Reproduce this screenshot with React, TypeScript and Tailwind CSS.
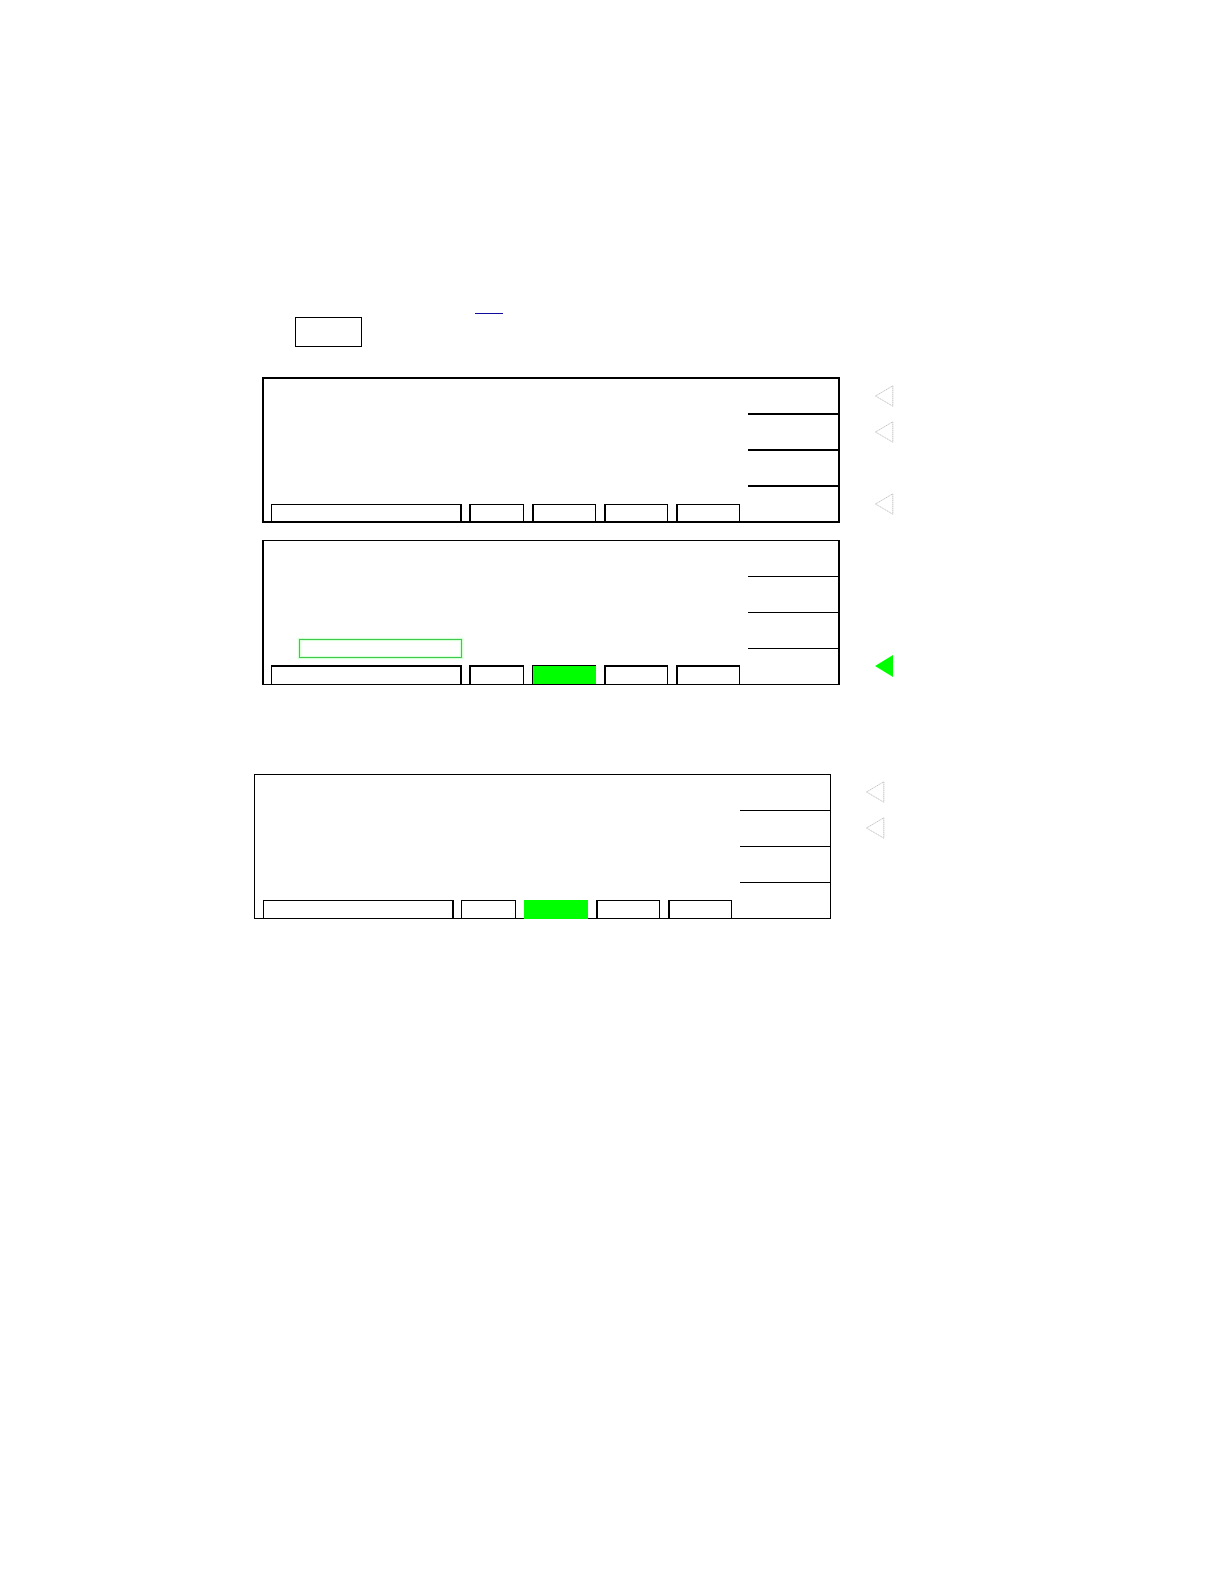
import clsx from 'clsx';

const softKeys = ['Soft key 1', 'Soft key 2', 'Soft key 3', 'Soft key 4'];

const screens = [
  {
    id: 'first',
    spacing: 'mt-[30px] ml-[262px]',
    frame: 'w-[578px] border-2',
    keyBorder: 'border-b-2',
    lastKey: 'h-[34px]',
    arrowPad: 'pt-px',
    arrows: ['outline', 'outline', 'none', 'outline'],
    tabPad: 'pl-[7px]',
    tabs: [
      'mr-[7px] h-[17px] flex-1 border-l border-t border-r-2',
      'mr-2 h-[17px] w-[55px] border-l-2 border-t border-r',
      'mr-2 h-[17px] w-16 border-l-2 border-t border-r',
      'mr-2 h-[17px] w-16 border-l-2 border-t border-r',
      'mr-2 h-[17px] w-16 border-l-2 border-t border-r',
    ],
    field: false,
  },
  {
    id: 'second',
    spacing: 'mt-[17px] ml-[262px]',
    frame: 'w-[578px] border-x-2 border-y',
    keyBorder: 'border-b',
    lastKey: 'h-[35px]',
    arrowPad: '',
    arrows: ['none', 'none', 'none', 'solid'],
    tabPad: 'pl-[7px]',
    tabs: [
      'mr-[7px] h-[19px] flex-1 border-l border-t-2 border-r-2',
      'mr-2 h-[19px] w-[55px] border-l-2 border-t-2 border-r',
      'mr-2 h-[19px] w-16 border-l border-t bg-[#00ff00]',
      'mr-2 h-[19px] w-16 border-l-2 border-t-2 border-r',
      'mr-2 h-[19px] w-16 border-l-2 border-t-2 border-r',
    ],
    field: true,
  },
  {
    id: 'third',
    spacing: 'mt-[89px] ml-[254px]',
    frame: 'w-[577px] border',
    keyBorder: 'border-b',
    lastKey: 'h-[35px]',
    arrowPad: '',
    arrows: ['outline', 'outline', 'none', 'none'],
    tabPad: 'pl-2',
    tabs: [
      'mr-[7px] h-[18px] flex-1 border-l border-t border-r-2',
      'mr-2 h-[18px] w-[55px] border-x border-t',
      'mr-2 -mb-px h-[19px] w-16 bg-[#00ff00]',
      'mr-2 h-[18px] w-16 border-l-2 border-t border-r',
      'mr-2 h-[18px] w-16 border-l-2 border-t border-r',
    ],
    field: false,
  },
];

function Arrow({ type }: { type: string }) {
  return (
    <svg width="19" height="22" viewBox="0 0 19 22" aria-hidden="true">
      {type === 'solid' ? (
        <path d="M0 11 L18 0 V22 Z" fill="#00ff00" />
      ) : (
        <path
          d="M0.5 11 L17.8 0.8 V21.2 Z"
          fill="none"
          stroke="#b8b8b8"
          strokeWidth="0.8"
          strokeDasharray="1.5 0.5"
        />
      )}
    </svg>
  );
}

function Screen({ screen }: { screen: (typeof screens)[number] }) {
  return (
    <section id={screen.id} className={clsx('flex items-start', screen.spacing)}>
      <div className={clsx('flex border-black', screen.frame)}>
        <div className="flex min-w-0 flex-1 flex-col justify-end">
          {screen.field && (
            <input
              aria-label="Entry"
              className="mb-[7px] ml-[35px] h-[19px] w-[163px] border border-[#3fc94f] shadow-[0_0_1px_1px_#d5ffd5,inset_0_0_1px_1px_#d5ffd5] outline-none"
            />
          )}
          <div className={clsx('flex items-end', screen.tabPad)}>
            {screen.tabs.map((tab, idx) => (
              <button key={idx} aria-label={`Tab ${idx + 1}`} className={clsx('border-black', tab)} />
            ))}
          </div>
        </div>
        <div className="flex w-[90px] shrink-0 flex-col">
          {softKeys.map((name, idx) => (
            <div key={name} className={clsx('border-black', idx < 3 ? ['h-9', screen.keyBorder] : screen.lastKey)} />
          ))}
        </div>
      </div>
      <div className={clsx('ml-[35px]', screen.arrowPad)}>
        {screen.arrows.map((type, idx) => (
          <div key={idx} className="flex h-9 items-center">
            {type !== 'none' && (
              <button aria-label={softKeys[idx]}>
                <Arrow type={type} />
              </button>
            )}
          </div>
        ))}
      </div>
    </section>
  );
}

export default function App() {
  return (
    <main className="min-h-screen bg-white pt-[313px] font-['Liberation_Sans',sans-serif]">
      <a href="#second" aria-label="Details" className="ml-[475px] block h-px w-7 bg-[#100c9c]" />
      <button aria-label="Key" className="mt-[3px] ml-[295px] block h-[30px] w-[67px] border border-black" />
      {screens.map((screen) => (
        <Screen key={screen.id} screen={screen} />
      ))}
    </main>
  );
}
